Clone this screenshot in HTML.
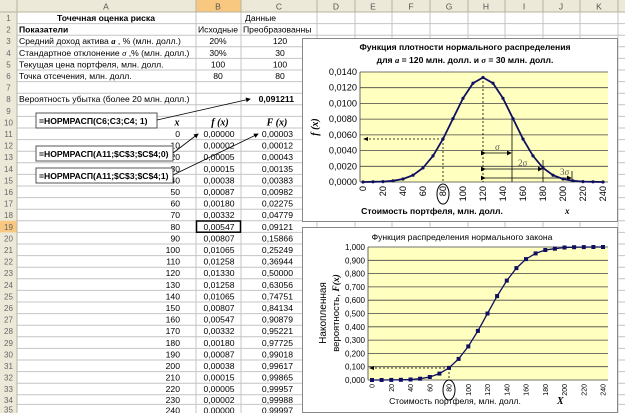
<!DOCTYPE html>
<html><head><meta charset="utf-8"><style>
html,body{margin:0;padding:0;background:#fff;width:625px;height:413px;overflow:hidden}
svg{display:block;font-family:"Liberation Sans",sans-serif}
</style></head><body>
<svg width="625" height="413" viewBox="0 0 625 413" xmlns="http://www.w3.org/2000/svg">
<defs>
<marker id="ah" markerWidth="6" markerHeight="6" refX="5" refY="3" orient="auto"><path d="M0,0 L6,3 L0,6z" fill="#000"/></marker>
</defs>
<rect width="625" height="413" fill="#fff"/>
<g stroke="#c4c4c4" stroke-width="1">
<line x1="0" y1="23.6" x2="625" y2="23.6"/><line x1="0" y1="35.2" x2="625" y2="35.2"/><line x1="0" y1="46.8" x2="625" y2="46.8"/><line x1="0" y1="58.4" x2="625" y2="58.4"/><line x1="0" y1="70" x2="625" y2="70"/><line x1="0" y1="81.6" x2="625" y2="81.6"/><line x1="0" y1="93.2" x2="625" y2="93.2"/><line x1="0" y1="104.8" x2="625" y2="104.8"/><line x1="0" y1="116.4" x2="625" y2="116.4"/><line x1="0" y1="128" x2="625" y2="128"/><line x1="0" y1="139.6" x2="625" y2="139.6"/><line x1="0" y1="151.2" x2="625" y2="151.2"/><line x1="0" y1="162.8" x2="625" y2="162.8"/><line x1="0" y1="174.4" x2="625" y2="174.4"/><line x1="0" y1="186" x2="625" y2="186"/><line x1="0" y1="197.6" x2="625" y2="197.6"/><line x1="0" y1="209.2" x2="625" y2="209.2"/><line x1="0" y1="220.8" x2="625" y2="220.8"/><line x1="0" y1="232.4" x2="625" y2="232.4"/><line x1="0" y1="244" x2="625" y2="244"/><line x1="0" y1="255.6" x2="625" y2="255.6"/><line x1="0" y1="267.2" x2="625" y2="267.2"/><line x1="0" y1="278.8" x2="625" y2="278.8"/><line x1="0" y1="290.4" x2="625" y2="290.4"/><line x1="0" y1="302" x2="625" y2="302"/><line x1="0" y1="313.6" x2="625" y2="313.6"/><line x1="0" y1="325.2" x2="625" y2="325.2"/><line x1="0" y1="336.8" x2="625" y2="336.8"/><line x1="0" y1="348.4" x2="625" y2="348.4"/><line x1="0" y1="360" x2="625" y2="360"/><line x1="0" y1="371.6" x2="625" y2="371.6"/><line x1="0" y1="383.2" x2="625" y2="383.2"/><line x1="0" y1="394.8" x2="625" y2="394.8"/><line x1="0" y1="404.4" x2="625" y2="404.4"/>
<line x1="196" y1="0" x2="196" y2="413"/><line x1="241" y1="0" x2="241" y2="413"/><line x1="317" y1="0" x2="317" y2="413"/><line x1="355" y1="0" x2="355" y2="413"/><line x1="392" y1="0" x2="392" y2="413"/><line x1="430" y1="0" x2="430" y2="413"/><line x1="468" y1="0" x2="468" y2="413"/><line x1="505" y1="0" x2="505" y2="413"/><line x1="543" y1="0" x2="543" y2="413"/><line x1="580" y1="0" x2="580" y2="413"/><line x1="618" y1="0" x2="618" y2="413"/>
</g>
<rect x="0" y="0" width="625" height="12" fill="#ece9d8"/>
<rect x="0" y="0" width="17" height="413" fill="#ece9d8"/>
<rect x="196" y="0" width="45" height="12" fill="#f8c880"/>
<rect x="0" y="220.8" width="17" height="11.6" fill="#f8c880"/>
<g stroke="#b8b4a0"><line x1="0" y1="12" x2="625" y2="12"/><line x1="17" y1="0" x2="17" y2="413"/>
<line x1="196" y1="0" x2="196" y2="12"/><line x1="241" y1="0" x2="241" y2="12"/><line x1="317" y1="0" x2="317" y2="12"/><line x1="355" y1="0" x2="355" y2="12"/><line x1="392" y1="0" x2="392" y2="12"/><line x1="430" y1="0" x2="430" y2="12"/><line x1="468" y1="0" x2="468" y2="12"/><line x1="505" y1="0" x2="505" y2="12"/><line x1="543" y1="0" x2="543" y2="12"/><line x1="580" y1="0" x2="580" y2="12"/><line x1="618" y1="0" x2="618" y2="12"/></g>
<g font-size="8.5" fill="#555" text-anchor="middle">
<text x="106" y="9.5">A</text><text x="218" y="9.5">B</text><text x="279" y="9.5">C</text><text x="336" y="9.5">D</text><text x="373" y="9.5">E</text><text x="411" y="9.5">F</text><text x="449" y="9.5">G</text><text x="486" y="9.5">H</text><text x="524" y="9.5">I</text><text x="561" y="9.5">J</text><text x="599" y="9.5">K</text>
</g>
<g font-size="8" fill="#666" text-anchor="middle">
<text x="8.5" y="21">1</text><text x="8.5" y="32.6">2</text><text x="8.5" y="44.2">3</text><text x="8.5" y="55.8">4</text><text x="8.5" y="67.4">5</text><text x="8.5" y="79">6</text><text x="8.5" y="90.6">7</text><text x="8.5" y="102.2">8</text><text x="8.5" y="113.8">9</text><text x="8.5" y="125.4">10</text><text x="8.5" y="137">11</text><text x="8.5" y="148.6">12</text><text x="8.5" y="160.2">13</text><text x="8.5" y="171.8">14</text><text x="8.5" y="183.4">15</text><text x="8.5" y="195">16</text><text x="8.5" y="206.6">17</text><text x="8.5" y="218.2">18</text><text x="8.5" y="229.8">19</text><text x="8.5" y="241.4">20</text><text x="8.5" y="253">21</text><text x="8.5" y="264.6">22</text><text x="8.5" y="276.2">23</text><text x="8.5" y="287.8">24</text><text x="8.5" y="299.4">25</text><text x="8.5" y="311">26</text><text x="8.5" y="322.6">27</text><text x="8.5" y="334.2">28</text><text x="8.5" y="345.8">29</text><text x="8.5" y="357.4">30</text><text x="8.5" y="369">31</text><text x="8.5" y="380.6">32</text><text x="8.5" y="392.2">33</text><text x="8.5" y="403">34</text><text x="8.5" y="412.5">35</text>
</g>
<g font-size="8.6" fill="#000">
<text x="106" y="21" text-anchor="middle" font-weight="bold">Точечная оценка риска</text>
<text x="245" y="21">Данные</text>
<text x="19" y="32.6" font-weight="bold">Показатели</text>
<text x="218" y="32.6" text-anchor="middle">Исходные</text>
<text x="243" y="32.6">Преобразованны</text>
<text x="19" y="44.2">Средний доход актива   <tspan font-family="Liberation Serif" font-style="italic" font-weight="bold">a</tspan> , % (млн. долл.)</text>
<text x="19" y="55.8">Стандартное отклонение  <tspan font-family="Liberation Serif" font-style="italic">σ</tspan> ,% (млн. долл.)</text>
<text x="19" y="67.4">Текущая цена портфеля, млн. долл.</text>
<text x="19" y="79">Точка отсечения, млн. долл.</text>
<text x="19" y="102.2">Вероятность убытка (более 20 млн. долл.)</text>
<g text-anchor="middle"><text x="218" y="44.2">20%</text><text x="218" y="55.8">30%</text><text x="218" y="67.4">100</text><text x="218" y="79">80</text>
<text x="280" y="44.2">120</text><text x="280" y="55.8">30</text><text x="280" y="67.4">100</text><text x="280" y="79">80</text></g>
<text x="294" y="102.2" text-anchor="end" font-weight="bold">0,091211</text>
<g font-family="Liberation Serif" font-style="italic" font-weight="bold" font-size="10" text-anchor="middle"><text x="177" y="125.4">x</text><text x="220" y="125.4">f (x)</text><text x="277" y="125.4">F (x)</text></g>
<g text-anchor="end">
<text x="180" y="137">0</text><text x="180" y="148.6">10</text><text x="180" y="160.2">20</text><text x="180" y="171.8">30</text><text x="180" y="183.4">40</text><text x="180" y="195">50</text><text x="180" y="206.6">60</text><text x="180" y="218.2">70</text><text x="180" y="229.8">80</text><text x="180" y="241.4">90</text><text x="180" y="253">100</text><text x="180" y="264.6">110</text><text x="180" y="276.2">120</text><text x="180" y="287.8">130</text><text x="180" y="299.4">140</text><text x="180" y="311">150</text><text x="180" y="322.6">160</text><text x="180" y="334.2">170</text><text x="180" y="345.8">180</text><text x="180" y="357.4">190</text><text x="180" y="369">200</text><text x="180" y="380.6">210</text><text x="180" y="392.2">220</text><text x="180" y="403">230</text><text x="180" y="413.5">240</text>
</g>
<g text-anchor="middle">
<text x="219" y="137">0,00000</text><text x="219" y="148.6">0,00002</text><text x="219" y="160.2">0,00005</text><text x="219" y="171.8">0,00015</text><text x="219" y="183.4">0,00038</text><text x="219" y="195">0,00087</text><text x="219" y="206.6">0,00180</text><text x="219" y="218.2">0,00332</text><text x="219" y="229.8">0,00547</text><text x="219" y="241.4">0,00807</text><text x="219" y="253">0,01065</text><text x="219" y="264.6">0,01258</text><text x="219" y="276.2">0,01330</text><text x="219" y="287.8">0,01258</text><text x="219" y="299.4">0,01065</text><text x="219" y="311">0,00807</text><text x="219" y="322.6">0,00547</text><text x="219" y="334.2">0,00332</text><text x="219" y="345.8">0,00180</text><text x="219" y="357.4">0,00087</text><text x="219" y="369">0,00038</text><text x="219" y="380.6">0,00015</text><text x="219" y="392.2">0,00005</text><text x="219" y="403">0,00002</text><text x="219" y="413.5">0,00000</text>
</g>
<g text-anchor="end">
<text x="293" y="137">0,00003</text><text x="293" y="148.6">0,00012</text><text x="293" y="160.2">0,00043</text><text x="293" y="171.8">0,00135</text><text x="293" y="183.4">0,00383</text><text x="293" y="195">0,00982</text><text x="293" y="206.6">0,02275</text><text x="293" y="218.2">0,04779</text><text x="293" y="229.8">0,09121</text><text x="293" y="241.4">0,15866</text><text x="293" y="253">0,25249</text><text x="293" y="264.6">0,36944</text><text x="293" y="276.2">0,50000</text><text x="293" y="287.8">0,63056</text><text x="293" y="299.4">0,74751</text><text x="293" y="311">0,84134</text><text x="293" y="322.6">0,90879</text><text x="293" y="334.2">0,95221</text><text x="293" y="345.8">0,97725</text><text x="293" y="357.4">0,99018</text><text x="293" y="369">0,99617</text><text x="293" y="380.6">0,99865</text><text x="293" y="392.2">0,99957</text><text x="293" y="403">0,99988</text><text x="293" y="413.5">0,99997</text>
</g>
</g>
<rect x="196.5" y="221" width="44" height="11.2" fill="none" stroke="#000" stroke-width="1.5"/>
<g font-size="8.6" font-weight="bold">
<rect x="36" y="113" width="121" height="15" fill="#fff" stroke="#555"/><text x="39" y="124">=НОРМРАСП(C6;C3;C4; 1)</text>
<rect x="36" y="146" width="137" height="15" fill="#fff" stroke="#555"/><text x="39" y="157">=НОРМРАСП(A11;$C$3;$C$4;0)</text>
<rect x="36" y="168" width="137" height="15" fill="#fff" stroke="#555"/><text x="39" y="179">=НОРМРАСП(A11;$C$3;$C$4;1)</text>
</g>
<g stroke="#000" stroke-width="0.8" marker-end="url(#ah)">
<line x1="157" y1="120" x2="250" y2="99"/>
<line x1="173" y1="153" x2="198" y2="134"/>
<line x1="173" y1="175" x2="258" y2="134"/>
</g>
<!-- chart 1 -->
<rect x="302.5" y="38.5" width="315" height="183" fill="#fff" stroke="#888"/>
<rect x="360" y="72" width="248" height="110" fill="#ffffc0"/>
<g stroke="#444" stroke-width="0.8"><line x1="360" y1="72" x2="608" y2="72"/><line x1="360" y1="87.7" x2="608" y2="87.7"/><line x1="360" y1="103.4" x2="608" y2="103.4"/><line x1="360" y1="119.1" x2="608" y2="119.1"/><line x1="360" y1="134.9" x2="608" y2="134.9"/><line x1="360" y1="150.6" x2="608" y2="150.6"/><line x1="360" y1="166.3" x2="608" y2="166.3"/><line x1="360" y1="182" x2="608" y2="182"/><line x1="360" y1="72" x2="360" y2="182"/></g>
<g font-size="8.6" font-weight="bold" text-anchor="middle"><text x="465" y="50">Функция плотности нормального распределения</text><text x="465" y="63">для <tspan font-family="Liberation Serif" font-style="italic">a</tspan>  = 120 млн. долл. и <tspan font-family="Liberation Serif" font-style="italic">σ</tspan> = 30 млн. долл.</text>
<text x="432" y="214">Стоимость портфеля, млн. долл.</text></g>
<text x="565" y="214" font-family="Liberation Serif" font-style="italic" font-weight="bold" font-size="9">x</text>
<text transform="translate(318,127) rotate(-90)" text-anchor="middle" font-family="Liberation Serif" font-style="italic" font-weight="bold" font-size="10">f (x)</text>
<g font-size="9.2" text-anchor="end"><text x="357" y="75">0,0140</text><text x="357" y="90.7">0,0120</text><text x="357" y="106.4">0,0100</text><text x="357" y="122.1">0,0080</text><text x="357" y="137.9">0,0060</text><text x="357" y="153.6">0,0040</text><text x="357" y="169.3">0,0020</text><text x="357" y="185">0,0000</text></g>
<g font-size="9.2" text-anchor="end">
<text transform="translate(366,186) rotate(-90)">0</text><text transform="translate(386,186) rotate(-90)">20</text><text transform="translate(406,186) rotate(-90)">40</text><text transform="translate(426,186) rotate(-90)">60</text><text transform="translate(446,186) rotate(-90)">80</text><text transform="translate(466,186) rotate(-90)">100</text><text transform="translate(486,186) rotate(-90)">120</text><text transform="translate(506,186) rotate(-90)">140</text><text transform="translate(526,186) rotate(-90)">160</text><text transform="translate(546,186) rotate(-90)">180</text><text transform="translate(566,186) rotate(-90)">200</text><text transform="translate(586,186) rotate(-90)">220</text><text transform="translate(606,186) rotate(-90)">240</text>
</g>
<ellipse cx="443" cy="194" rx="6" ry="10" fill="none" stroke="#000"/>
<g stroke="#000" stroke-width="0.8" stroke-dasharray="2,2" fill="none"><line x1="483" y1="77" x2="483" y2="182"/><line x1="443" y1="139" x2="443" y2="182"/><line x1="443" y1="139" x2="365" y2="139"/></g>
<path d="M363,139 l5,-2 v4z"/>
<g stroke="#000" stroke-width="0.8"><line x1="512" y1="118" x2="512" y2="182"/><line x1="543" y1="160" x2="543" y2="182"/><line x1="572" y1="171" x2="572" y2="182"/></g>
<g stroke="#000" stroke-width="0.8" marker-end="url(#ah)" marker-start="url(#ah)"><line x1="485" y1="153" x2="511" y2="153"/><line x1="485" y1="169" x2="542" y2="169"/><line x1="485" y1="178" x2="571" y2="178"/></g>
<g font-family="Liberation Serif" font-size="9" fill="#555"><text x="495" y="150">σ</text><text x="518" y="166">2σ</text><text x="560" y="175">3σ</text></g>
<polyline fill="none" stroke="#101060" stroke-width="1.8" points="363,182 373,181.8 383,181.6 393,180.8 403,179 413,175.2 423,167.9 433,155.9 443,139 453,118.6 463,98.3 473,83.2 483,77.5 493,83.2 503,98.3 513,118.6 523,139 533,155.9 543,167.9 553,175.2 563,179 573,180.8 583,181.6 593,181.8 603,182"/>
<g fill="#101060"><circle cx="363" cy="182" r="1.6"/><circle cx="373" cy="181.8" r="1.6"/><circle cx="383" cy="181.6" r="1.6"/><circle cx="393" cy="180.8" r="1.6"/><circle cx="403" cy="179" r="1.6"/><circle cx="413" cy="175.2" r="1.6"/><circle cx="423" cy="167.9" r="1.6"/><circle cx="433" cy="155.9" r="1.6"/><circle cx="443" cy="139" r="1.6"/><circle cx="453" cy="118.6" r="1.6"/><circle cx="463" cy="98.3" r="1.6"/><circle cx="473" cy="83.2" r="1.6"/><circle cx="483" cy="77.5" r="1.6"/><circle cx="493" cy="83.2" r="1.6"/><circle cx="503" cy="98.3" r="1.6"/><circle cx="513" cy="118.6" r="1.6"/><circle cx="523" cy="139" r="1.6"/><circle cx="533" cy="155.9" r="1.6"/><circle cx="543" cy="167.9" r="1.6"/><circle cx="553" cy="175.2" r="1.6"/><circle cx="563" cy="179" r="1.6"/><circle cx="573" cy="180.8" r="1.6"/><circle cx="583" cy="181.6" r="1.6"/><circle cx="593" cy="181.8" r="1.6"/><circle cx="603" cy="182" r="1.6"/></g>
<!-- chart 2 -->
<rect x="302.5" y="227.5" width="315" height="185" fill="#fff" stroke="#888"/>
<rect x="368" y="247" width="240" height="133" fill="#ffffc0"/>
<g stroke="#444" stroke-width="0.8"><line x1="368" y1="247" x2="608" y2="247"/><line x1="368" y1="260.3" x2="608" y2="260.3"/><line x1="368" y1="273.6" x2="608" y2="273.6"/><line x1="368" y1="286.9" x2="608" y2="286.9"/><line x1="368" y1="300.2" x2="608" y2="300.2"/><line x1="368" y1="313.5" x2="608" y2="313.5"/><line x1="368" y1="326.8" x2="608" y2="326.8"/><line x1="368" y1="340.1" x2="608" y2="340.1"/><line x1="368" y1="353.4" x2="608" y2="353.4"/><line x1="368" y1="366.7" x2="608" y2="366.7"/><line x1="368" y1="380" x2="608" y2="380"/><line x1="368" y1="247" x2="368" y2="380"/></g>
<text x="462" y="240" font-size="8.6" text-anchor="middle">Функция распределения нормального закона</text>
<text x="455" y="404" font-size="8.6" text-anchor="middle">Стоимость портфеля, млн. долл.</text>
<text x="557" y="404" font-family="Liberation Serif" font-style="italic" font-weight="bold" font-size="10">X</text>
<text transform="translate(326,313) rotate(-90)" text-anchor="middle" font-size="10">Накопленная</text>
<text transform="translate(339,313) rotate(-90)" text-anchor="middle" font-size="9.5">вероятность, <tspan font-family="Liberation Serif" font-style="italic" font-weight="bold">F(x)</tspan></text>
<g font-size="8" text-anchor="end"><text x="365" y="250">1,000</text><text x="365" y="263.3">0,900</text><text x="365" y="276.6">0,800</text><text x="365" y="289.9">0,700</text><text x="365" y="303.2">0,600</text><text x="365" y="316.5">0,500</text><text x="365" y="329.8">0,400</text><text x="365" y="343.1">0,300</text><text x="365" y="356.4">0,200</text><text x="365" y="369.7">0,100</text><text x="365" y="383">0,000</text></g>
<g font-size="7" text-anchor="end">
<text transform="translate(374.5,384) rotate(-90)">0</text><text transform="translate(393.8,384) rotate(-90)">20</text><text transform="translate(413,384) rotate(-90)">40</text><text transform="translate(432.3,384) rotate(-90)">60</text><text transform="translate(451.5,384) rotate(-90)">80</text><text transform="translate(470.8,384) rotate(-90)">100</text><text transform="translate(490,384) rotate(-90)">120</text><text transform="translate(509.3,384) rotate(-90)">140</text><text transform="translate(528.5,384) rotate(-90)">160</text><text transform="translate(547.8,384) rotate(-90)">180</text><text transform="translate(567,384) rotate(-90)">200</text><text transform="translate(586.3,384) rotate(-90)">220</text><text transform="translate(605.5,384) rotate(-90)">240</text>
</g>
<ellipse cx="449" cy="390" rx="6" ry="10" fill="none" stroke="#000"/>
<g stroke="#000" stroke-width="0.8" stroke-dasharray="2,2" fill="none"><line x1="449" y1="368" x2="449" y2="380"/><line x1="449" y1="368" x2="372" y2="368"/></g>
<path d="M369,368 l5,-2 v4z"/>
<polyline fill="none" stroke="#101060" stroke-width="1.3" points="372,380 381.6,380 391.3,379.9 400.9,379.8 410.5,379.5 420.1,378.7 429.8,377 439.4,373.6 449,367.9 458.6,358.9 468.3,346.4 477.9,330.9 487.5,313.5 497.1,296.1 506.8,280.6 516.4,268.1 526,259.1 535.6,253.4 545.3,250 554.9,248.7 564.5,247.5 574.1,247.2 583.8,247.1 593.4,247 603,247"/>
<g fill="#101060"><rect x="370" y="378" width="4" height="4"/><rect x="379.6" y="378" width="4" height="4"/><rect x="389.3" y="377.9" width="4" height="4"/><rect x="398.9" y="377.8" width="4" height="4"/><rect x="408.5" y="377.5" width="4" height="4"/><rect x="418.1" y="376.7" width="4" height="4"/><rect x="427.8" y="375" width="4" height="4"/><rect x="437.4" y="371.6" width="4" height="4"/><rect x="447" y="365.9" width="4" height="4"/><rect x="456.6" y="356.9" width="4" height="4"/><rect x="466.3" y="344.4" width="4" height="4"/><rect x="475.9" y="328.9" width="4" height="4"/><rect x="485.5" y="311.5" width="4" height="4"/><rect x="495.1" y="294.1" width="4" height="4"/><rect x="504.8" y="278.6" width="4" height="4"/><rect x="514.4" y="266.1" width="4" height="4"/><rect x="524" y="257.1" width="4" height="4"/><rect x="533.6" y="251.4" width="4" height="4"/><rect x="543.3" y="248" width="4" height="4"/><rect x="552.9" y="246.7" width="4" height="4"/><rect x="562.5" y="245.5" width="4" height="4"/><rect x="572.1" y="245.2" width="4" height="4"/><rect x="581.8" y="245.1" width="4" height="4"/><rect x="591.4" y="245" width="4" height="4"/><rect x="601" y="245" width="4" height="4"/></g>
</svg>
</body></html>
